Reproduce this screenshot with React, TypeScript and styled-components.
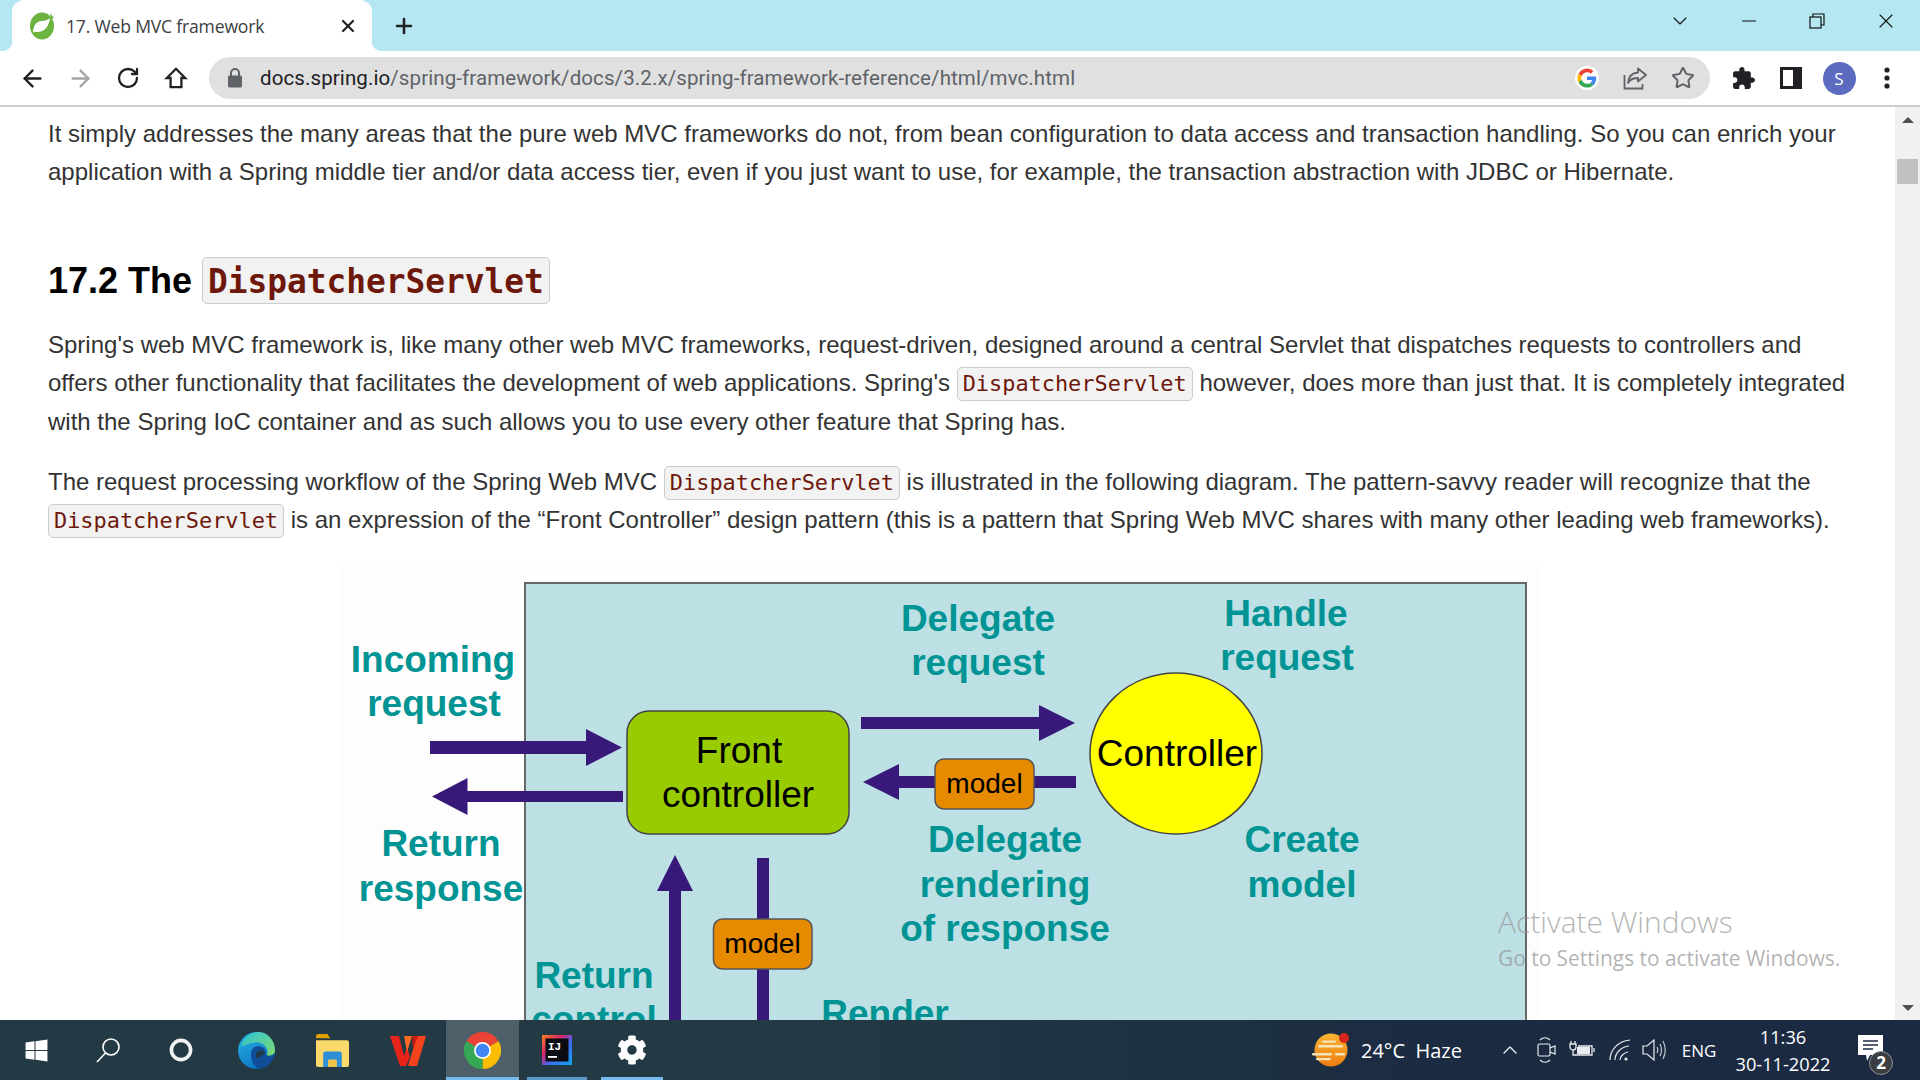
import React from "react";
import styled, { createGlobalStyle } from "styled-components";
import { ArrowLeft, ArrowRight, RotateCw, Star, Plus, X, ChevronDown, Minus, ChevronUp } from "lucide-react";
import { FaWindows, FaCog } from "react-icons/fa";

const GlobalStyle = createGlobalStyle`
  html, body {
    margin: 0;
    padding: 0;
    height: 100%;
    overflow: hidden;
    background: #fff;
    font-family: "Liberation Sans", Arial, sans-serif;
  }
`;

const Page = styled.div`
  position: relative;
  width: 1920px;
  height: 1080px;
  display: flex;
  flex-direction: column;
  overflow: hidden;
`;

/* chrome tab strip */
const TabStrip = styled.div`
  height: 51px;
  flex: none;
  display: flex;
  align-items: stretch;
  padding-left: 12px;
  background: #b5e7f3;
`;

const Tab = styled.div`
  position: relative;
  width: 360px;
  display: flex;
  align-items: center;
  padding: 0 14px 0 17px;
  box-sizing: border-box;
  background: #fff;
  border-radius: 12px 12px 0 0;

  &::before,
  &::after {
    content: "";
    position: absolute;
    bottom: 0;
    width: 10px;
    height: 10px;
  }
  &::before {
    left: -10px;
    background: radial-gradient(circle at 0 0, transparent 10px, #fff 10.5px);
  }
  &::after {
    right: -10px;
    background: radial-gradient(circle at 100% 0, transparent 10px, #fff 10.5px);
  }
`;

const TabTitle = styled.span`
  flex: 1;
  margin-left: 11px;
  font-family: "Open Sans", sans-serif;
  font-size: 17.6px;
  letter-spacing: -0.2px;
  color: #3c4043;
`;

const NewTab = styled.div`
  width: 36px;
  margin-left: 14px;
  display: flex;
  align-items: center;
  justify-content: center;
  color: #202124;
`;

const Spacer = styled.div`
  flex: 1;
`;

const WindowButton = styled.div`
  width: 68.5px;
  display: flex;
  align-items: center;
  justify-content: center;
  padding-bottom: 9px;
  color: #111;
`;

/* chrome toolbar */
const Toolbar = styled.div`
  height: 54px;
  flex: none;
  display: flex;
  align-items: center;
  padding: 0 9px 0 8px;
  background: #fff;
  border-bottom: 2px solid #cdcdcd;
`;

const NavButton = styled.div<{ $muted?: boolean }>`
  width: 48px;
  display: flex;
  align-items: center;
  justify-content: center;
  color: ${({ $muted }) => ($muted ? "#a3a5a8" : "#202124")};
`;

const Omnibox = styled.div`
  flex: 1;
  height: 42px;
  margin: 0 9px;
  padding: 0 3px 0 18px;
  display: flex;
  align-items: center;
  border-radius: 21px;
  background: #e0e0e0;
`;

const Url = styled.div`
  flex: 1;
  margin-left: 17px;
  font-family: Roboto, sans-serif;
  font-size: 20.5px;
  letter-spacing: 0.1px;
  color: #5f6368;

  b {
    font-weight: 400;
    color: #202124;
  }
`;

const OmniIcon = styled.div`
  width: 48px;
  display: flex;
  align-items: center;
  justify-content: center;
  color: #5f6368;
`;

const Avatar = styled.div`
  width: 33px;
  height: 33px;
  border-radius: 50%;
  background: #5c6bc0;
  color: #fff;
  font-family: "Open Sans", sans-serif;
  font-size: 17px;
  display: flex;
  align-items: center;
  justify-content: center;
`;

const Viewport = styled.div`
  flex: 1;
  min-height: 0;
  display: flex;
  overflow: hidden;
`;

/* docs page */
const Content = styled.main`
  flex: 1;
  min-width: 0;
  padding: 8px 40px 0 48px;
  overflow: hidden;
  color: #333;
  font-size: 24px;
  line-height: 38.4px;
`;

const Para = styled.p`
  margin: 0 0 22px;
`;

const Heading = styled.h2`
  margin: 66px 0 22px;
  font-size: 36px;
  line-height: 46px;
  font-weight: 700;
  color: #000;
`;

const Code = styled.code<{ $big?: boolean }>`
  font-family: "DejaVu Sans Mono", "Liberation Mono", monospace;
  font-size: ${({ $big }) => ($big ? "32.8px" : "21.9px")};
  line-height: 1;
  padding: ${({ $big }) => ($big ? "4.5px 5px 2.5px" : "3px 5px 4px")};
  color: #6d180b;
  background: #f2f2f2;
  border: 1px solid #ccc;
  border-radius: 5px;
`;

const Diagram = styled.svg`
  display: block;
  margin: 25px 0 0 292px;
`;

const Label = styled.text`
  font-family: "Liberation Sans", Arial, sans-serif;
  font-size: 37px;
  font-weight: 700;
  fill: #009494;
  text-anchor: middle;
`;

const BoxText = styled.text<{ $small?: boolean }>`
  font-family: "Liberation Sans", Arial, sans-serif;
  font-size: ${({ $small }) => ($small ? "28px" : "37px")};
  fill: #000;
  text-anchor: middle;
`;

const Scrollbar = styled.div`
  width: 25px;
  flex: none;
  display: flex;
  flex-direction: column;
  align-items: center;
  background: #f1f1f1;
`;

const ScrollArrow = styled.div<{ $down?: boolean }>`
  width: 0;
  height: 0;
  margin: ${({ $down }) => ($down ? "auto 0 9px" : "10px 0 0")};
  border-left: 6px solid transparent;
  border-right: 6px solid transparent;
  ${({ $down }) => ($down ? "border-top: 6px solid #505050;" : "border-bottom: 6px solid #505050;")}
`;

const ScrollThumb = styled.div`
  width: 21px;
  height: 25px;
  margin-top: 36px;
  background: #c1c1c1;
`;

/* windows taskbar */
const Taskbar = styled.footer`
  height: 60px;
  flex: none;
  display: flex;
  align-items: stretch;
  color: #fff;
  background: linear-gradient(90deg, #233a44 0%, #233a44 40%, #1b2b42 75%, #1b2a42 100%);
  font-family: "Open Sans", sans-serif;
`;

const TaskButton = styled.div<{ $w: number; $active?: boolean; $line?: string }>`
  position: relative;
  width: ${({ $w }) => $w}px;
  flex: none;
  display: flex;
  align-items: center;
  justify-content: center;
  background: ${({ $active }) => ($active ? "#4d6069" : "transparent")};

  &::after {
    content: "";
    display: ${({ $line }) => ($line ? "block" : "none")};
    position: absolute;
    left: 0;
    right: 0;
    bottom: 0;
    height: 3px;
    background: ${({ $line }) => $line};
  }
`;

const Weather = styled.div`
  margin-left: auto;
  width: 186px;
  display: flex;
  align-items: center;
  gap: 11px;
  padding-left: 10px;
  box-sizing: border-box;
  font-size: 20px;
  white-space: pre;
`;

const TrayIcon = styled.div<{ $w: number }>`
  width: ${({ $w }) => $w}px;
  flex: none;
  display: flex;
  align-items: center;
  justify-content: center;
  color: #e8ecef;
`;

const Lang = styled.div`
  width: 58px;
  flex: none;
  display: flex;
  align-items: center;
  justify-content: center;
  font-size: 17px;
`;

const Clock = styled.div`
  width: 110px;
  flex: none;
  display: flex;
  flex-direction: column;
  align-items: center;
  justify-content: center;
  gap: 5px;
  font-size: 18.2px;
  line-height: 22px;
  white-space: nowrap;
`;

const Notify = styled.div`
  position: relative;
  width: 82px;
  flex: none;
  box-sizing: border-box;
  padding-left: 20px;
  display: flex;
  align-items: center;
`;

const Badge = styled.span`
  position: absolute;
  left: 31px;
  top: 31px;
  width: 24px;
  height: 24px;
  box-sizing: border-box;
  border: 1px solid #8a929a;
  border-radius: 50%;
  background: #3a3d41;
  font-size: 17px;
  font-weight: 700;
  line-height: 21px;
  text-align: center;
`;

const Watermark = styled.div`
  position: absolute;
  left: 1498px;
  top: 902px;
  color: rgba(150, 150, 150, 0.72);
  font-family: "Open Sans", sans-serif;
  font-weight: 300;
  pointer-events: none;

  strong {
    display: block;
    font-weight: 300;
    font-size: 29.9px;
    line-height: 40px;
  }
  span {
    display: block;
    font-weight: 400;
    font-size: 20.9px;
    line-height: 32px;
  }
`;

const SpringLeaf = () => (
  <svg width="26" height="28" viewBox="0 0 26 28">
    <ellipse cx="13" cy="14" rx="12" ry="13.5" fill="#6db33f" />
    <path d="M21 6c-1 8-5 14-13 14-2 0-3-1-4 1 0-7 3-12 9-12 3 0 6-1 8-3z" fill="#fff" />
    <path d="M21 1l4 5-3 1z" fill="#6db33f" />
  </svg>
);

const HomeIcon = () => (
  <svg width="26" height="26" viewBox="0 0 24 24" fill="none" stroke="currentColor" strokeWidth="2.1">
    <path d="M12 3.5 3.5 12H7v8.5h10V12h3.5z" strokeLinejoin="miter" />
  </svg>
);

const LockIcon = () => (
  <svg width="16" height="20" viewBox="0 0 16 20" fill="#5f6368">
    <rect x="1" y="7.5" width="14" height="12" rx="1.5" />
    <path d="M4 8V5a4 4 0 0 1 8 0v3" fill="none" stroke="#5f6368" strokeWidth="2" />
  </svg>
);

const GoogleIcon = () => (
  <svg width="24" height="24" viewBox="-6 -6 60 60">
    <circle cx="24" cy="24" r="30" fill="#fff" />
    <path fill="#EA4335" d="M24 9.5c3.54 0 6.71 1.22 9.21 3.6l6.85-6.85C35.9 2.38 30.47 0 24 0 14.62 0 6.51 5.38 2.56 13.22l7.98 6.19C12.43 13.72 17.74 9.5 24 9.5z" />
    <path fill="#4285F4" d="M46.98 24.55c0-1.57-.15-3.09-.38-4.55H24v9.02h12.94c-.58 2.96-2.26 5.48-4.78 7.18l7.73 6c4.51-4.18 7.09-10.36 7.09-17.65z" />
    <path fill="#FBBC05" d="M10.53 28.59c-.48-1.45-.76-2.99-.76-4.59s.27-3.14.76-4.59l-7.98-6.19C.92 16.46 0 20.12 0 24c0 3.88.92 7.54 2.56 10.78l7.97-6.19z" />
    <path fill="#34A853" d="M24 48c6.48 0 11.93-2.13 15.89-5.81l-7.73-6c-2.15 1.45-4.92 2.3-8.16 2.3-6.26 0-11.57-4.22-13.47-9.91l-7.98 6.19C6.51 42.62 14.62 48 24 48z" />
  </svg>
);

const ShareIcon = () => (
  <svg width="24" height="24" viewBox="0 0 24 24" fill="none" stroke="currentColor" strokeWidth="1.8">
    <path d="M1.5 9v13.5h18V18" />
    <path d="M15 2.5 23 9l-8 6.5V12c-5 0-8 1.5-10 5 .5-6 4-10 10-10.5z" strokeLinejoin="round" />
  </svg>
);

const PuzzleIcon = () => (
  <svg width="25" height="25" viewBox="0 0 24 24" fill="#202124">
    <path d="M20.5 11H19V7c0-1.1-.9-2-2-2h-4V3.5C13 2.12 11.88 1 10.5 1S8 2.12 8 3.5V5H4c-1.1 0-1.99.9-1.99 2v3.8H3.5c1.49 0 2.7 1.21 2.7 2.7s-1.21 2.7-2.7 2.7H2V20c0 1.1.9 2 2 2h3.8v-1.5c0-1.49 1.21-2.7 2.7-2.7 1.49 0 2.7 1.21 2.7 2.7V22H17c1.1 0 2-.9 2-2v-4h1.5c1.38 0 2.5-1.12 2.5-2.5S21.88 11 20.5 11z" />
  </svg>
);

const SidePanelIcon = () => (
  <svg width="22" height="22" viewBox="0 0 22 22">
    <rect width="22" height="22" fill="#202124" />
    <rect x="3" y="3" width="10" height="16" fill="#fff" />
  </svg>
);

const DotsIcon = () => (
  <svg width="6" height="22" viewBox="0 0 6 22" fill="#202124">
    <circle cx="3" cy="3" r="2.6" />
    <circle cx="3" cy="11" r="2.6" />
    <circle cx="3" cy="19" r="2.6" />
  </svg>
);

const RestoreIcon = () => (
  <svg width="16" height="16" viewBox="0 0 16 16" fill="none" stroke="#111" strokeWidth="1.2">
    <rect x="1" y="4" width="11" height="11" />
    <path d="M4 4V1h11v11h-3" />
  </svg>
);

const SearchIcon = () => (
  <svg width="26" height="26" viewBox="0 0 26 26" fill="none" stroke="#fff" strokeWidth="1.6">
    <circle cx="16" cy="10" r="8" />
    <path d="M10.5 16 2 25" />
  </svg>
);

const CortanaIcon = () => (
  <svg width="24" height="24" viewBox="0 0 24 24" fill="none" stroke="#f2f2f2" strokeWidth="3.6">
    <circle cx="12" cy="12" r="9.6" />
  </svg>
);

const EdgeIcon = () => (
  <svg width="37" height="37" viewBox="0 0 48 48">
    <defs>
      <linearGradient id="edgeBlue" x1="0" y1="0" x2="0.6" y2="1">
        <stop offset="0" stopColor="#29b6e8" />
        <stop offset="1" stopColor="#0b6fc2" />
      </linearGradient>
      <linearGradient id="edgeGreen" x1="0" y1="0" x2="1" y2="1">
        <stop offset="0" stopColor="#2fc2d8" />
        <stop offset="1" stopColor="#7fdc6c" />
      </linearGradient>
    </defs>
    <circle cx="24" cy="24" r="24" fill="url(#edgeBlue)" />
    <path d="M4 18C8 6 18 0 26 0c12 0 22 10 22 24 0 6-6 9-12 8 3-3 3-7 1-11-3-6-10-9-17-7-7 1-13 5-16 4z" fill="url(#edgeGreen)" />
    <path d="M17 28c0-7 6-11 13-9 5 1 7 6 5 10 4 3 9 2 13-2-2 12-10 20-21 21-6-3-11-12-10-20z" fill="#0f4d96" />
    <path d="M23 31c0-4 3-7 7-7 3 0 5 2 5 5-3 1-6 2-8 5-2-1-4-1-4-3z" fill="#233a44" />
  </svg>
);

const FolderIcon = () => (
  <svg width="33" height="33" viewBox="0 0 32 32">
    <path d="M0 2a2 2 0 0 1 2-2h9l3 4h-14z" fill="#e0a100" />
    <path d="M0 6h30a2 2 0 0 1 2 2v22a2 2 0 0 1-2 2H2a2 2 0 0 1-2-2z" fill="#fbd96b" />
    <path d="M7 32V19a2 2 0 0 1 2-2h14a2 2 0 0 1 2 2v13h-5v-7h-8v7z" fill="#2d8fd5" />
    <path d="M12 25h8v7h-8z" fill="#f3c445" />
  </svg>
);

const WpsIcon = () => (
  <svg width="36" height="32" viewBox="0 0 36 32">
    <path d="M0 2h9l5 20 3-9 3 10-4 9H10z" fill="#e8231a" />
    <path d="M14 2h8l-5 16z" fill="#ff6a22" />
    <path d="M27 2h9l-9 30h-9z" fill="#f5431c" />
    <path d="M22 2h6l-5 13z" fill="#c81d12" />
  </svg>
);

const ChromeIcon = () => (
  <svg width="37" height="37" viewBox="0 0 48 48">
    <path d="M24 24 3.2 12A24 24 0 0 1 44.8 12z" fill="#ea4335" />
    <path d="M24 24 44.8 12A24 24 0 0 1 24 48z" fill="#fbbc04" />
    <path d="M24 24 24 48A24 24 0 0 1 3.2 12z" fill="#34a853" />
    <circle cx="24" cy="24" r="11" fill="#fff" />
    <circle cx="24" cy="24" r="8.8" fill="#4285f4" />
  </svg>
);

const IntellijIcon = () => (
  <svg width="30" height="30" viewBox="0 0 30 30">
    <defs>
      <linearGradient id="ijEdge" x1="0" y1="0" x2="1" y2="1">
        <stop offset="0" stopColor="#fc801d" />
        <stop offset="0.35" stopColor="#d6246e" />
        <stop offset="0.6" stopColor="#3a6cf0" />
        <stop offset="1" stopColor="#12a6ec" />
      </linearGradient>
    </defs>
    <rect width="30" height="30" fill="url(#ijEdge)" />
    <rect x="3.5" y="3.5" width="23" height="23" fill="#0b0b12" />
    <text x="6" y="15" fontFamily="Liberation Mono, monospace" fontSize="11" fontWeight="700" fill="#fff">IJ</text>
    <rect x="6" y="21" width="9" height="1.8" fill="#fff" />
  </svg>
);

const WeatherIcon = () => (
  <svg width="38" height="34" viewBox="0 0 38 34">
    <defs>
      <linearGradient id="sun" x1="0" y1="0" x2="0" y2="1">
        <stop offset="0" stopColor="#f8b431" />
        <stop offset="1" stopColor="#ee7d12" />
      </linearGradient>
    </defs>
    <circle cx="19" cy="17" r="16.5" fill="url(#sun)" />
    <g fill="#f5e4b8">
      <rect x="6" y="12" width="25" height="2.4" rx="1.2" />
      <rect x="10" y="7.5" width="14" height="2.2" rx="1.1" />
      <rect x="0" y="20" width="20" height="2.4" rx="1.2" />
      <rect x="23" y="20" width="10" height="2.4" rx="1.2" />
      <rect x="4" y="25" width="15" height="2.2" rx="1.1" />
    </g>
    <circle cx="32" cy="5" r="5" fill="#d8261c" />
  </svg>
);

const MeetIcon = () => (
  <svg width="20" height="28" viewBox="0 0 20 28" fill="none" stroke="currentColor" strokeWidth="1.2">
    <path d="M3 4c3-3 7-3 10 0M3 24c3 3 7 3 10 0" />
    <rect x="1" y="8" width="12" height="12" rx="1.5" />
    <path d="M13 12l5-2v8l-5-2" />
  </svg>
);

const BatteryIcon = () => (
  <svg width="26" height="20" viewBox="0 0 26 20" fill="none" stroke="currentColor" strokeWidth="1.3">
    <path d="M2 1v3M6 1v3M1 4h6v3a3 3 0 0 1-6 0zM4 10v5h19V6H9" />
    <rect x="8" y="7" width="13" height="7" fill="currentColor" stroke="none" />
    <path d="M25 8v4" />
  </svg>
);

const WifiIcon = () => (
  <svg width="22" height="22" viewBox="0 0 22 22" fill="none" stroke="currentColor" strokeWidth="1.2">
    <path d="M1 21C1 11 9 2 21 1M6 21c0-7 6-13 14-14M11 21c0-3 3-7 8-8" />
    <circle cx="17" cy="20" r="1.6" fill="currentColor" stroke="none" />
  </svg>
);

const VolumeIcon = () => (
  <svg width="24" height="24" viewBox="0 0 24 24" fill="none" stroke="currentColor" strokeWidth="1.2">
    <path d="M1 8h4l7-6v20l-7-6H1z" />
    <path d="M15 9c1 2 1 4 0 6M18 6c2 4 2 8 0 12M21 3c3 6 3 12 0 18" opacity="0.8" />
  </svg>
);

const NotifyIcon = () => (
  <svg width="26" height="30" viewBox="0 0 26 30" fill="#fff">
    <path d="M0 0h25v20H12l-3 6-1-6H0z" />
    <path d="M5 6h15M5 10h15M5 14h10" stroke="#1b2a42" strokeWidth="1.4" />
  </svg>
);

const labels = [
  { x: 433, y: 672, t: "Incoming" },
  { x: 434, y: 716, t: "request" },
  { x: 441, y: 856, t: "Return" },
  { x: 441, y: 901, t: "response" },
  { x: 978, y: 631, t: "Delegate" },
  { x: 978, y: 675, t: "request" },
  { x: 1286, y: 626, t: "Handle" },
  { x: 1287, y: 670, t: "request" },
  { x: 1005, y: 852, t: "Delegate" },
  { x: 1005, y: 897, t: "rendering" },
  { x: 1005, y: 941, t: "of response" },
  { x: 1302, y: 852, t: "Create" },
  { x: 1302, y: 897, t: "model" },
  { x: 594, y: 988, t: "Return" },
  { x: 594, y: 1032, t: "control" },
  { x: 885, y: 1026, t: "Render" },
];

const PURPLE = "#38197a";

const MvcDiagram = () => (
  <Diagram width="1200" height="455" viewBox="340 565 1200 455">
    <rect x="340" y="565" width="1200" height="455" fill="#fdfdfd" />
    <rect x="525" y="583" width="1001" height="520" fill="#bce0e4" stroke="#666" strokeWidth="2" />

    {/* arrows */}
    <path d="M430 741H586V729L622 747.5 586 766V754H430z" fill={PURPLE} />
    <path d="M623 791H467.5V778L432 796.5 467.5 815V802H623z" fill={PURPLE} />
    <path d="M861 717H1039V705L1075 723 1039 741V729H861z" fill={PURPLE} />
    <path d="M1076 776H899V764L863 782 899 800V788H1076z" fill={PURPLE} />
    <path d="M669 1030V891H657L675 855 693 891H681V1030z" fill={PURPLE} />
    <rect x="757" y="858" width="12" height="170" fill={PURPLE} />

    <rect x="627" y="711" width="222" height="123" rx="22" fill="#99cc00" stroke="#444" strokeWidth="1.5" />
    <BoxText x="739" y="763">Front</BoxText>
    <BoxText x="738" y="807">controller</BoxText>

    <ellipse cx="1176" cy="753.5" rx="86" ry="80.5" fill="#ffff00" stroke="#444" strokeWidth="1.5" />
    <BoxText x="1177" y="766">Controller</BoxText>

    <rect x="935" y="759" width="99" height="50" rx="9" fill="#e68a00" stroke="#555" strokeWidth="1.5" />
    <BoxText $small x="984.5" y="793">model</BoxText>
    <rect x="713.5" y="919" width="98.5" height="50" rx="9" fill="#e68a00" stroke="#555" strokeWidth="1.5" />
    <BoxText $small x="762.5" y="953">model</BoxText>

    {labels.map((l) => (
      <Label key={`${l.t}-${l.x}`} x={l.x} y={l.y}>
        {l.t}
      </Label>
    ))}
  </Diagram>
);

export default function App() {
  return (
    <Page>
      <GlobalStyle />
      <TabStrip>
        <Tab>
          <SpringLeaf />
          <TabTitle>17. Web MVC framework</TabTitle>
          <X size={20} color="#202124" strokeWidth={2.6} />
        </Tab>
        <NewTab>
          <Plus size={24} strokeWidth={2.6} />
        </NewTab>
        <Spacer />
        <WindowButton>
          <ChevronDown size={24} strokeWidth={1.1} />
        </WindowButton>
        <WindowButton>
          <Minus size={22} strokeWidth={1.3} />
        </WindowButton>
        <WindowButton>
          <RestoreIcon />
        </WindowButton>
        <WindowButton>
          <X size={24} strokeWidth={1.1} />
        </WindowButton>
      </TabStrip>

      <Toolbar>
        <NavButton>
          <ArrowLeft size={27} strokeWidth={2.1} />
        </NavButton>
        <NavButton $muted>
          <ArrowRight size={27} strokeWidth={2.1} />
        </NavButton>
        <NavButton>
          <RotateCw size={24} strokeWidth={2.3} />
        </NavButton>
        <NavButton>
          <HomeIcon />
        </NavButton>
        <Omnibox>
          <LockIcon />
          <Url>
            <b>docs.spring.io</b>/spring-framework/docs/3.2.x/spring-framework-reference/html/mvc.html
          </Url>
          <OmniIcon>
            <GoogleIcon />
          </OmniIcon>
          <OmniIcon>
            <ShareIcon />
          </OmniIcon>
          <OmniIcon>
            <Star size={24} strokeWidth={2} />
          </OmniIcon>
        </Omnibox>
        <NavButton>
          <PuzzleIcon />
        </NavButton>
        <NavButton>
          <SidePanelIcon />
        </NavButton>
        <NavButton>
          <Avatar>S</Avatar>
        </NavButton>
        <NavButton>
          <DotsIcon />
        </NavButton>
      </Toolbar>

      <Viewport>
        <Content>
          <Para>
            It simply addresses the many areas that the pure web MVC frameworks do not, from bean configuration to data
            access and transaction handling. So you can enrich your application with a Spring middle tier and/or data
            access tier, even if you just want to use, for example, the transaction abstraction with JDBC or Hibernate.
          </Para>
          <Heading>
            17.2 The <Code $big>DispatcherServlet</Code>
          </Heading>
          <Para>
            Spring's web MVC framework is, like many other web MVC frameworks, request-driven, designed around a central
            Servlet that dispatches requests to controllers and offers other functionality that facilitates the
            development of web applications. Spring's <Code>DispatcherServlet</Code> however, does more than just that.
            It is completely integrated with the Spring IoC container and as such allows you to use every other feature
            that Spring has.
          </Para>
          <Para>
            The request processing workflow of the Spring Web MVC <Code>DispatcherServlet</Code> is illustrated in the
            following diagram. The pattern-savvy reader will recognize that the <Code>DispatcherServlet</Code> is an
            expression of the “Front Controller” design pattern (this is a pattern that Spring Web MVC shares with many
            other leading web frameworks).
          </Para>
          <MvcDiagram />
        </Content>
        <Scrollbar>
          <ScrollArrow />
          <ScrollThumb />
          <ScrollArrow $down />
        </Scrollbar>
      </Viewport>

      <Taskbar>
        <TaskButton $w={72}>
          <FaWindows size={25} />
        </TaskButton>
        <TaskButton $w={72}>
          <SearchIcon />
        </TaskButton>
        <TaskButton $w={74}>
          <CortanaIcon />
        </TaskButton>
        <TaskButton $w={76}>
          <EdgeIcon />
        </TaskButton>
        <TaskButton $w={76}>
          <FolderIcon />
        </TaskButton>
        <TaskButton $w={76}>
          <WpsIcon />
        </TaskButton>
        <TaskButton $w={73} $active $line="#76b9ed">
          <ChromeIcon />
        </TaskButton>
        <TaskButton $w={8} />
        <TaskButton $w={60} $line="#5e9ac9">
          <IntellijIcon />
        </TaskButton>
        <TaskButton $w={14} />
        <TaskButton $w={62} $line="#76b9ed">
          <FaCog size={30} />
        </TaskButton>

        <Weather>
          <WeatherIcon />
          <span>24°C  Haze</span>
        </Weather>
        <TrayIcon $w={44}>
          <ChevronUp size={24} strokeWidth={1.4} />
        </TrayIcon>
        <TrayIcon $w={30}>
          <MeetIcon />
        </TrayIcon>
        <TrayIcon $w={40}>
          <BatteryIcon />
        </TrayIcon>
        <TrayIcon $w={36}>
          <WifiIcon />
        </TrayIcon>
        <TrayIcon $w={32}>
          <VolumeIcon />
        </TrayIcon>
        <Lang>ENG</Lang>
        <Clock>
          <span>11:36</span>
          <span>30-11-2022</span>
        </Clock>
        <Notify>
          <NotifyIcon />
          <Badge>2</Badge>
        </Notify>
      </Taskbar>

      <Watermark>
        <strong>Activate Windows</strong>
        <span>Go to Settings to activate Windows.</span>
      </Watermark>
    </Page>
  );
}
